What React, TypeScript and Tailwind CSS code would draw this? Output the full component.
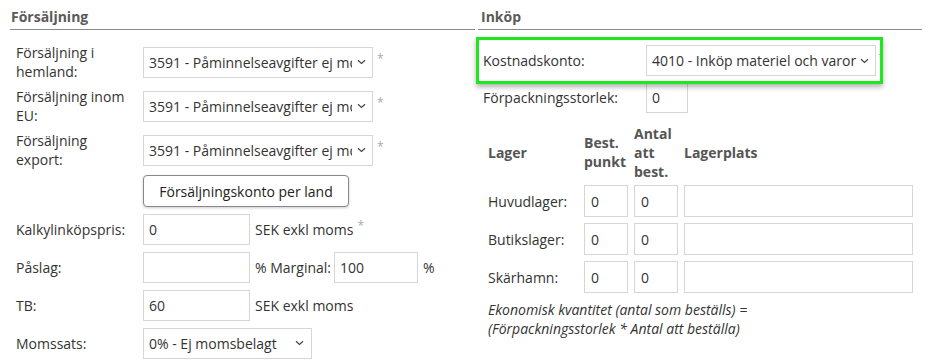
import React from "react";

function Chevron() {
  return (
    <svg width="9" height="6" viewBox="0 0 9 6" className="shrink-0">
      <path d="M1 1.2l3.5 3.3 3.5-3.3" fill="none" stroke="#444" strokeWidth="1.2" />
    </svg>
  );
}

function Select({ value, className, gap = "mr-[5px]" }: { value: string; className: string; gap?: string }) {
  return (
    <div className={`flex items-center h-[31px] border border-[#d6d6d6] bg-white pl-[5px] pr-[6px] shrink-0 ${className}`}>
      <span className={`flex-1 overflow-hidden whitespace-nowrap ${gap}`}>{value}</span>
      <Chevron />
    </div>
  );
}

function Input({ value, className }: { value?: string; className: string }) {
  return (
    <div className={`flex items-center h-[31px] border border-[#d6d6d6] bg-white pl-[5px] shrink-0 ${className}`}>
      {value}
    </div>
  );
}

function Star({ className = "ml-[4px]" }: { className?: string }) {
  return <span className={`mb-[6px] text-[12px] text-[#aaa] ${className}`}>*</span>;
}

function TwoLineLabel({ a, b }: { a: string; b: string }) {
  return (
    <div className="w-[133px] pl-[6px] leading-[19px]">
      {a}
      <br />
      {b}
    </div>
  );
}

export default function App() {
  const lager = ["Huvudlager:", "Butikslager:", "Skärhamn:"];
  return (
    <div className="w-[932px] h-[364px] bg-white text-[14px] text-[#333] font-['Open_Sans',sans-serif] flex pl-[10px] gap-[3px] overflow-hidden">
      {/* Försäljning */}
      <div className="w-[465px]">
        <div className="h-[30px] border-b border-[#888] pl-[1px] pt-[7px] leading-[19px] font-bold text-[#5a5a5a]">
          Försäljning
        </div>
        <div className="mt-[10px]">
          <div className="flex items-center h-[44px]">
            <TwoLineLabel a="Försäljning i" b="hemland:" />
            <Select value="3591 - Påminnelseavgifter ej moms" className="w-[230px]" />
            <Star />
          </div>
          <div className="flex items-center h-[44px]">
            <TwoLineLabel a="Försäljning inom" b="EU:" />
            <Select value="3591 - Påminnelseavgifter ej moms" className="w-[230px]" />
            <Star />
          </div>
          <div className="flex items-center h-[44px]">
            <TwoLineLabel a="Försäljning" b="export:" />
            <Select value="3591 - Påminnelseavgifter ej moms" className="w-[230px]" />
            <Star />
          </div>
          <div className="flex items-center h-[38px] pl-[133px]">
            <button className="w-[206px] h-[32px] border border-[#888] rounded-[4px] bg-white text-[#222] shadow-[0_1px_3px_rgba(0,0,0,0.2)]">
              Försäljningskonto per land
            </button>
          </div>
          <div className="flex items-center h-[38px]">
            <div className="w-[133px] pl-[6px]">Kalkylinköpspris:</div>
            <Input value="0" className="w-[107px]" />
            <span className="ml-[5px]">SEK exkl moms</span>
            <Star />
          </div>
          <div className="flex items-center h-[38px]">
            <div className="w-[133px] pl-[6px]">Påslag:</div>
            <Input className="w-[107px]" />
            <span className="ml-[5px] w-[79px]">% Marginal:</span>
            <Input value="100" className="w-[84px]" />
            <span className="ml-[5px]">%</span>
          </div>
          <div className="flex items-center h-[38px]">
            <div className="w-[133px] pl-[6px]">TB:</div>
            <Input value="60" className="w-[107px]" />
            <span className="ml-[5px]">SEK exkl moms</span>
          </div>
          <div className="flex items-center h-[38px]">
            <div className="w-[133px] pl-[6px]">Momssats:</div>
            <Select value="0% - Ej momsbelagt" className="w-[169px] pr-[7px]" />
          </div>
        </div>
      </div>

      {/* Inköp */}
      <div className="w-[444px]">
        <div className="h-[30px] border-b border-[#888] pl-[3px] pt-[7px] leading-[19px] font-bold text-[#5a5a5a]">
          Inköp
        </div>
        <div className="relative z-10 ml-[-2px] mt-[7px] w-[407px] h-[47px] border-[3px] border-[#1de81d] bg-white shadow-[0_3px_5px_rgba(0,0,0,0.3)] flex items-center pl-[4px] overflow-hidden">
          <div className="w-[163px] shrink-0">Kostnadskonto:</div>
          <Select value="4010 - Inköp materiel och varor" className="w-[230px] pl-[4px]" gap="mr-[2px]" />
          <Star className="ml-[2px]" />
        </div>
        <div className="flex items-center h-[31px] mt-[-2px] pl-[5px]">
          <div className="w-[163px]">Förpackningsstorlek:</div>
          <Input value="0" className="w-[42px] h-[31px]" />
        </div>
        <div className="ml-[10px] mt-[9px] grid grid-cols-[90px_44px_44px_229px] grid-rows-[60px_38px_38px_38px] gap-x-[6px]">
          <div className="flex items-center font-bold text-[#555]">Lager</div>
          <div className="flex items-center font-bold text-[#555] leading-[19px]">
            <span>
              Best.
              <br />
              punkt
            </span>
          </div>
          <div className="flex items-center font-bold text-[#555] leading-[19px]">
            <span>
              Antal
              <br />
              att
              <br />
              best.
            </span>
          </div>
          <div className="flex items-center font-bold text-[#555]">Lagerplats</div>
          {lager.map((l) => (
            <React.Fragment key={l}>
              <div className="flex items-center">{l}</div>
              <div className="flex items-center">
                <Input value="0" className="w-[44px] h-[32px] pl-[6px]" />
              </div>
              <div className="flex items-center">
                <Input value="0" className="w-[44px] h-[32px] pl-[6px]" />
              </div>
              <div className="flex items-center">
                <Input className="w-[229px] h-[32px]" />
              </div>
            </React.Fragment>
          ))}
        </div>
        <div className="ml-[10px] mt-[4px] italic leading-[19px] text-[#333]">
          Ekonomisk kvantitet (antal som beställs) =
          <br />
          (Förpackningsstorlek * Antal att beställa)
        </div>
      </div>
    </div>
  );
}
